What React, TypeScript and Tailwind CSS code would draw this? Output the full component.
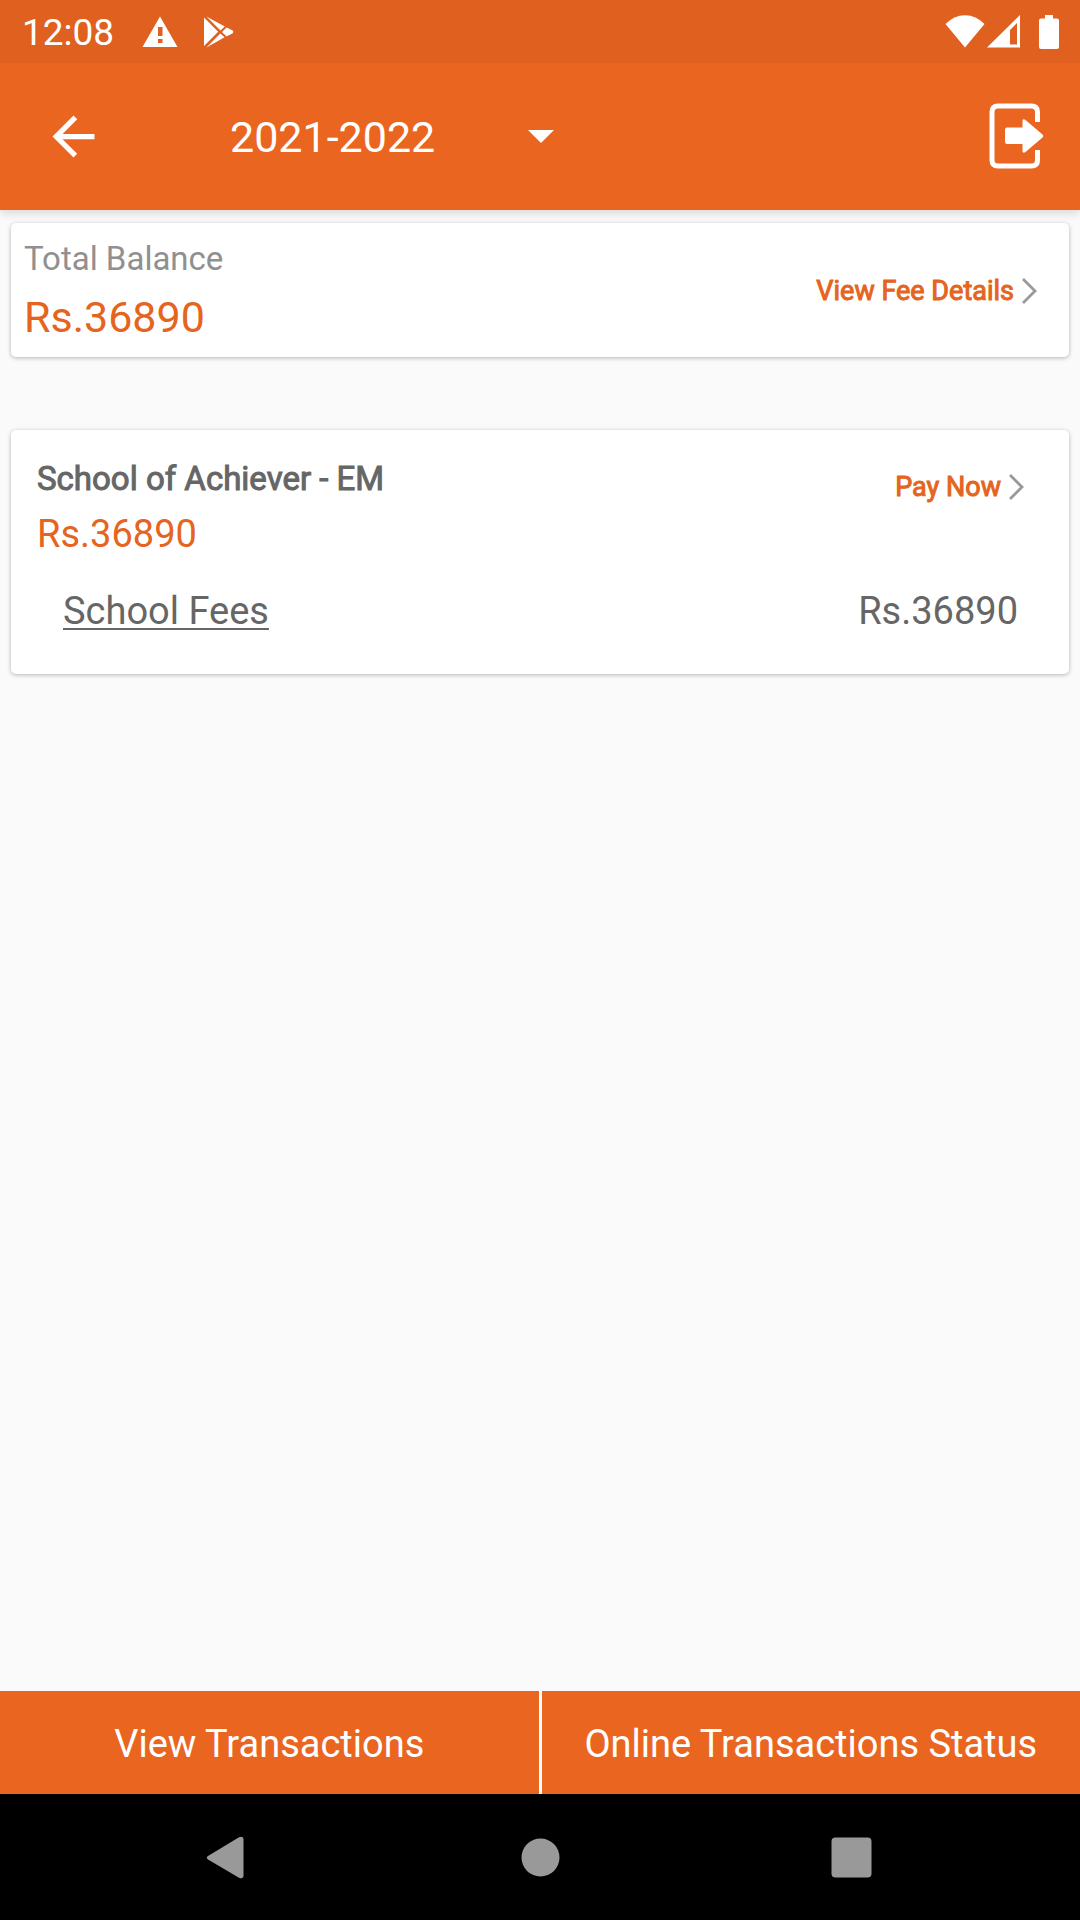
interface FeeItem {
  name: string;
  amount: number;
}

interface School {
  name: string;
  total: number;
  fees: FeeItem[];
}

const years = ["2021-2022"];

const schools: School[] = [
  {
    name: "School of Achiever - EM",
    total: 36890,
    fees: [{ name: "School Fees", amount: 36890 }],
  },
];

function StatusBar() {
  return (
    <div className="relative z-10 flex h-[63px] items-center justify-between bg-[#e06020] pl-[22px] pr-[21px] text-white">
      <div className="flex items-center">
        <span className="pt-[2px] text-[37px] leading-[44px]">12:08</span>
        <svg className="ml-[28px] h-8 w-9" viewBox="0 0 36 32" fill="currentColor">
          <path
            fillRule="evenodd"
            d="M18 0.5 L35.5 31 H0.5 Z M16 11 V20 H20.5 V11 Z M16 23 V27 H20.5 V23 Z"
          />
        </svg>
        <svg className="ml-[26px] h-8 w-[30px]" viewBox="0 0 30 32" fill="currentColor">
          <path d="M0 1.5 L14.2 15.7 L0 30 Z" />
          <path d="M2.4 0.4 L20.8 10.5 L16.5 14.4 Z" />
          <path d="M2.4 31.4 L16.3 17.4 L20.6 21.3 Z" />
          <path d="M18 15.9 L22.6 11.6 L28.7 14.6 Q30 15.8 28.7 17.2 L22.6 20.4 Z" />
        </svg>
      </div>
      <div className="flex items-center">
        <svg className="h-[34px] w-10" viewBox="0 0 40 34" fill="currentColor">
          <path d="M0.5 9 Q9 0.2 20 0.2 T39.5 9 L20 32.5 Z" />
        </svg>
        <svg className="ml-[2px] h-[34px] w-[33px]" viewBox="0 0 33 34" fill="currentColor">
          <path fillRule="evenodd" d="M33 0 V32.5 H0 Z M30 8 L23 15 V29.5 H30 Z" />
        </svg>
        <svg className="ml-[19px] h-[34px] w-5" viewBox="0 0 20 34" fill="currentColor">
          <path d="M6 0 H14 V3.5 H18 Q20 3.5 20 5.5 V32 Q20 34 18 34 H2 Q0 34 0 32 V5.5 Q0 3.5 2 3.5 H6 Z" />
        </svg>
      </div>
    </div>
  );
}

function Header() {
  return (
    <header className="relative flex h-[147px] items-center bg-[#ea6520] pl-[42px] pr-[35px] text-white shadow-[0_4px_8px_rgba(0,0,0,0.12)]">
      <button type="button" aria-label="Back">
        <svg className="h-[63px] w-[63px]" viewBox="0 0 24 24" fill="currentColor">
          <path d="M20 11H7.83l5.59-5.59L12 4l-8 8 8 8 1.41-1.41L7.83 13H20v-2z" />
        </svg>
      </button>
      <div className="relative ml-[125px] flex w-[324px] items-center">
        <select
          aria-label="Academic year"
          className="w-full appearance-none bg-transparent text-[43px] leading-[56px] outline-none"
        >
          {years.map((year) => (
            <option key={year}>{year}</option>
          ))}
        </select>
        <svg
          className="pointer-events-none absolute right-0 h-[13px] w-[26px]"
          viewBox="0 0 26 13"
          fill="currentColor"
        >
          <path d="M0 0 H26 L13 13 Z" />
        </svg>
      </div>
      <button type="button" aria-label="Log out" className="ml-auto pb-[2px]">
        <svg className="h-[66px] w-14" viewBox="0 0 56 66">
          <path
            d="M48.5 19 V9 Q48.5 3 42.5 3 H9 Q3 3 3 9 V57 Q3 63 9 63 H42.5 Q48.5 63 48.5 57 V47"
            fill="none"
            stroke="currentColor"
            strokeWidth="5"
          />
          <path
            d="M18 24.5 H33.5 V17.5 Q34 15.5 36.5 17 L53.5 31.5 Q55 33 53.5 34.5 L36.5 49 Q34 50.5 33.5 48.5 V41 H18 Q16 41 16 39 V26.5 Q16 24.5 18 24.5 Z"
            fill="currentColor"
          />
        </svg>
      </button>
    </header>
  );
}

function LinkWithArrow({ label }: { label: string }) {
  return (
    <a
      href="#"
      className="flex items-center gap-2 text-[27px] leading-[44px] text-[#e56420] [-webkit-text-stroke:1px]"
    >
      {label}
      <svg className="h-[26px] w-[15px]" viewBox="0 0 15 26" fill="none" stroke="#999999" strokeWidth="2.8">
        <path d="M1 1 L13 13 L1 25" />
      </svg>
    </a>
  );
}

function SchoolCard({ school }: { school: School }) {
  return (
    <section className="rounded-[5px] bg-white pt-[27px] pb-[41px] shadow-[0_1px_4px_rgba(0,0,0,0.28)]">
      <div className="flex items-start justify-between pl-[26px] pr-[45px]">
        <div>
          <h2 className="text-[33px] leading-[44px] text-[#666666] [-webkit-text-stroke:1px]">{school.name}</h2>
          <p className="mt-[11px] text-[38px] leading-[44px] text-[#e56420]">Rs.{school.total}</p>
        </div>
        <div className="mt-2">
          <LinkWithArrow label="Pay Now" />
        </div>
      </div>
      {school.fees.map((fee) => (
        <div
          key={fee.name}
          className="mt-[33px] flex justify-between pl-[52px] pr-[51px] text-[38px] leading-[44px] text-[#666666]"
        >
          <a href="#" className="underline decoration-2 underline-offset-4">
            {fee.name}
          </a>
          <span>Rs.{fee.amount}</span>
        </div>
      ))}
    </section>
  );
}

function NavigationBar() {
  return (
    <nav className="flex h-[126px] items-center justify-center gap-[248px] bg-black text-[#999999]">
      <button type="button" aria-label="System back">
        <svg className="h-[63px] w-[63px]" viewBox="0 0 63 63" fill="currentColor">
          <path d="M10 30 L41 11.2 Q45 9.5 45.5 13 V50 Q45 53.5 41 51.8 L10 33.5 Q7.5 31.7 10 30 Z" />
        </svg>
      </button>
      <button type="button" aria-label="Home">
        <svg className="h-[63px] w-[63px]" viewBox="0 0 63 63" fill="currentColor">
          <circle cx="31.5" cy="31.5" r="19" />
        </svg>
      </button>
      <button type="button" aria-label="Recent apps">
        <svg className="h-[63px] w-[63px]" viewBox="0 0 63 63" fill="currentColor">
          <rect x="11.5" y="11.5" width="40" height="40" rx="4" />
        </svg>
      </button>
    </nav>
  );
}

export default function App() {
  const balance = schools.reduce((sum, school) => sum + school.total, 0);

  return (
    <div className="flex min-h-screen flex-col bg-[#fafafa] font-[Roboto,sans-serif]">
      <StatusBar />
      <Header />

      <main className="flex flex-1 flex-col gap-[73px] px-[11px] pt-[13px]">
        <section className="flex items-center justify-between rounded-[5px] bg-white pt-[14px] pr-[32px] pb-3 pl-[13px] shadow-[0_1px_4px_rgba(0,0,0,0.28)]">
          <div>
            <h1 className="text-[33px] leading-[44px] text-[#909090]">Total Balance</h1>
            <p className="mt-2 text-[43px] leading-[56px] text-[#e56420]">Rs.{balance}</p>
          </div>
          <LinkWithArrow label="View Fee Details" />
        </section>

        {schools.map((school) => (
          <SchoolCard key={school.name} school={school} />
        ))}
      </main>

      <div className="flex gap-[3px] bg-white text-[38px] leading-[44px] text-white">
        <button type="button" className="h-[103px] flex-1 bg-[#ea6520] pt-[2px]">
          View Transactions
        </button>
        <button type="button" className="h-[103px] flex-1 bg-[#ea6520] pt-[2px]">
          Online Transactions Status
        </button>
      </div>
      <NavigationBar />
    </div>
  );
}
